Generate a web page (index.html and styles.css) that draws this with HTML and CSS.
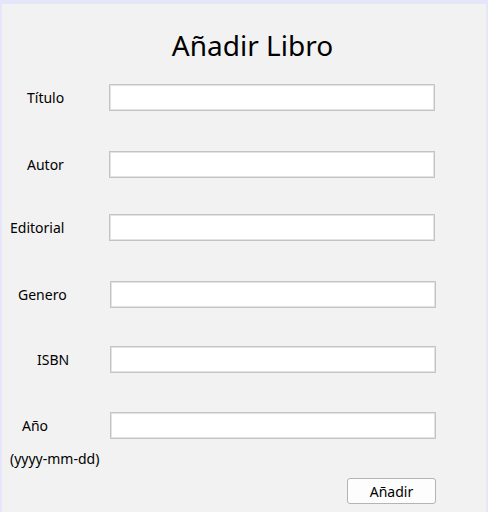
FILE: index.html
```html
<!DOCTYPE html>
<html lang="es">
<head>
<meta charset="utf-8">
<title>Añadir Libro</title>
<link rel="stylesheet" href="styles.css">
</head>
<body>
<div class="window">
  <h1 class="title">Añadir Libro</h1>
  <div class="form">
    <div class="row row-titulo"><label class="lbl lbl-titulo">Título</label><input class="field" type="text"></div>
    <div class="row row-autor"><label class="lbl lbl-autor">Autor</label><input class="field" type="text"></div>
    <div class="row row-editorial"><label class="lbl lbl-editorial">Editorial</label><input class="field" type="text"></div>
    <div class="row row-genero shift"><label class="lbl lbl-genero">Genero</label><input class="field" type="text"></div>
    <div class="row row-isbn shift"><label class="lbl lbl-isbn">ISBN</label><input class="field" type="text"></div>
    <div class="row row-anio shift"><label class="lbl lbl-anio">Año</label><input class="field" type="text"></div>
    <div class="hint">(yyyy-mm-dd)</div>
    <div class="actions"><button class="btn" type="button">Añadir</button></div>
  </div>
</div>
</body>
</html>
```
FILE: styles.css
```css
html, body {
  margin: 0;
  padding: 0;
  background: #e6e6fa;
  height: 512px;
  overflow: hidden;
}
.window {
  margin: 4px 2px 0 2px;
  height: 508px;
  background: #f2f2f2;
  font-family: "Noto Sans", "Open Sans", sans-serif;
  color: #000;
  box-sizing: border-box;
  padding-top: 22px;
}
.title {
  margin: 0;
  font-weight: 400;
  font-size: 28px;
  line-height: 38px;
  text-align: center;
  padding-left: 17px;
}
.form {
  margin-top: 20px;
}
.row {
  display: flex;
  align-items: center;
  height: 27px;
}
.lbl {
  width: 107px;
  box-sizing: border-box;
  font-size: 14px;
}
.shift .lbl { width: 108px; }
.lbl-titulo { padding-left: 25px; }
.lbl-autor { padding-left: 25px; }
.lbl-editorial { padding-left: 8px; }
.lbl-genero { padding-left: 16px; }
.lbl-isbn { padding-left: 35px; }
.lbl-anio { padding-left: 20px; }
.row-autor { margin-top: 40px; }
.row-editorial { margin-top: 36px; }
.row-genero { margin-top: 40px; }
.row-isbn { margin-top: 38px; }
.row-anio { margin-top: 39px; }
.field {
  width: 326px;
  height: 27px;
  box-sizing: border-box;
  margin: 0;
  border: 1px solid #c4c4c4;
  outline: 1px solid #e3e3e3;
  outline-offset: -2px;
  background: #fff;
  padding: 0 4px;
}
.hint {
  margin-top: 10px;
  padding-left: 8px;
  font-size: 14px;
  line-height: 20px;
}
.actions {
  display: flex;
  justify-content: flex-end;
  width: 434px;
  margin-top: 9px;
}
.btn {
  width: 89px;
  height: 26px;
  box-sizing: border-box;
  border: 1px solid #b4b4b4;
  border-radius: 3px;
  background: #fdfdfd;
  font-family: "Noto Sans", "Open Sans", sans-serif;
  font-size: 14px;
  color: #000;
  padding: 0;
}
```
